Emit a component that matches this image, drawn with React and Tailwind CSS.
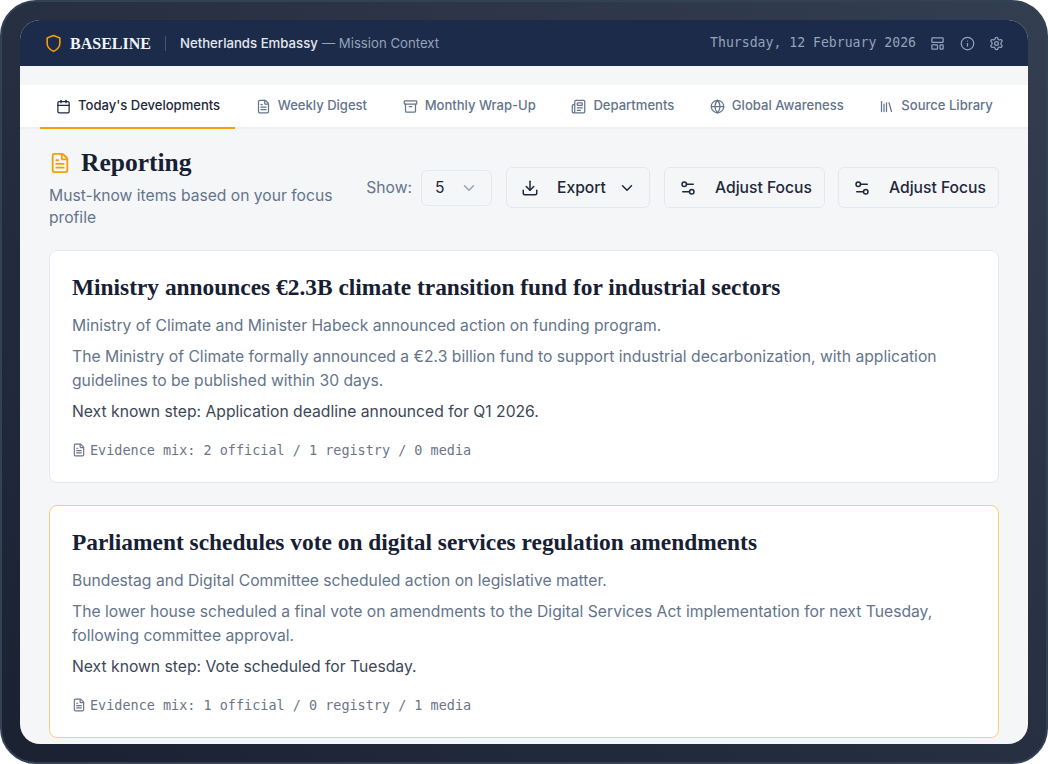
import { Archive, Calendar, ChevronDown, Download, FileText, Globe, Info, LayoutTemplate, Library, Newspaper, Settings, Settings2 } from 'lucide-react'

const serif = 'font-["Liberation_Serif",serif]'
const mono = 'font-["DejaVu_Sans_Mono",monospace]'

const tabs = [
  { label: "Today's Developments", icon: Calendar, active: true },
  { label: 'Weekly Digest', icon: FileText },
  { label: 'Monthly Wrap-Up', icon: Archive },
  { label: 'Departments', icon: Newspaper },
  { label: 'Global Awareness', icon: Globe },
  { label: 'Source Library', icon: Library },
]

const cards = [
  {
    title: 'Ministry announces €2.3B climate transition fund for industrial sectors',
    summary: 'Ministry of Climate and Minister Habeck announced action on funding program.',
    body: 'The Ministry of Climate formally announced a €2.3 billion fund to support industrial decarbonization, with application guidelines to be published within 30 days.',
    next: 'Next known step: Application deadline announced for Q1 2026.',
    evidence: 'Evidence mix: 2 official / 1 registry / 0 media',
    border: 'border-[#e2e8f0]',
  },
  {
    title: 'Parliament schedules vote on digital services regulation amendments',
    summary: 'Bundestag and Digital Committee scheduled action on legislative matter.',
    body: 'The lower house scheduled a final vote on amendments to the Digital Services Act implementation for next Tuesday, following committee approval.',
    next: 'Next known step: Vote scheduled for Tuesday.',
    evidence: 'Evidence mix: 1 official / 0 registry / 1 media',
    border: 'border-[#f6cf7f]',
  },
]

function ToolButton({ icon: Icon, label, chevron, className }) {
  return (
    <button className={`h-[41px] flex items-center border border-[#e2e8f0] rounded-md text-[15.65px] font-medium text-[#1e293b] ${className}`}>
      <Icon size={18} strokeWidth={2} />
      <span className="pt-[1px]">{label}</span>
      {chevron && <ChevronDown size={18} className="-ml-[6px]" />}
    </button>
  )
}

function Card({ card }) {
  return (
    <div className={`h-[233px] shrink-0 bg-white border rounded-lg px-[22px] pt-[20px] ${card.border}`}>
      <h2 className={`${serif} text-[23.4px] leading-[32px] font-bold text-[#172033]`}>{card.title}</h2>
      <div className="text-[15.7px] leading-[24px]">
        <p className="mt-[11px] text-[#64748b]">{card.summary}</p>
        <p className="mt-[7px] text-[#64748b]">{card.body}</p>
        <p className="mt-[7px] text-[#3b4757]">{card.next}</p>
      </div>
      <div className="mt-[16px] flex items-center gap-[4px] text-[#6b7588]">
        <FileText size={14} />
        <span className={`${mono} text-[13.47px] leading-[20px]`}>{card.evidence}</span>
      </div>
    </div>
  )
}

export default function App() {
  return (
    <div className='w-[1048px] h-[764px] overflow-hidden font-["Inter",sans-serif] bg-white'>
      <div className="w-full h-full p-[18px] rounded-[36px] border-2 border-[#334155] bg-linear-to-tr from-[#1a2232] to-[#333e50]">
        <div className="h-full rounded-[20px] overflow-hidden bg-[#f5f6f8] flex flex-col">

          <header className="h-[46px] shrink-0 bg-[#1c2b4a] flex items-center justify-between px-[24px]">
            <div className="flex items-center pt-[1px]">
              <svg width="19" height="19" viewBox="0 0 24 24" fill="none" stroke="currentColor" strokeWidth="2" strokeLinecap="round" strokeLinejoin="round" className="text-[#f59e0b]">
                <path d="M12 22s8-4 8-10V5l-8-3-8 3v7c0 6 8 10 8 10" />
              </svg>
              <span className={`${serif} ml-[7px] text-[16px] font-bold text-[#f1f5f9]`}>BASELINE</span>
              <span className="ml-[14px] w-px h-[15px] bg-[#475569]"></span>
              <span className="ml-[14px] text-[13.2px] font-medium text-[#e2e8f0]">Netherlands Embassy</span>
              <span className="ml-[4px] text-[13.2px] text-[#94a3b8]">— Mission Context</span>
            </div>
            <div className="flex items-center text-[#94a3b8]">
              <span className={`${mono} text-[13.17px]`}>Thursday, 12 February 2026</span>
              <LayoutTemplate size={15} className="ml-[14px]" />
              <Info size={15} className="ml-[15px]" />
              <Settings size={15} className="ml-[14px]" />
            </div>
          </header>

          <nav className="mt-[19px] h-[44px] shrink-0 bg-white border-b-2 border-[#eef0f3] flex items-stretch pl-[20px] gap-[4.6px]">
            {tabs.map((tab) => (
              <div
                key={tab.label}
                className={`-mb-[2px] flex items-center gap-[7px] pl-[16px] pr-[15px] border-b-2 text-[13.05px] font-medium ${tab.active ? 'border-[#f59e0b] text-[#1e293b]' : 'border-transparent text-[#64748b]'}`}
              >
                <tab.icon size={15} />
                <span>{tab.label}</span>
              </div>
            ))}
          </nav>

          <main className="flex-1 min-h-0 px-[29px] pt-[20px]">
            <div className="h-[101px] flex items-start justify-between">
              <div className="w-[300px]">
                <div className="flex items-center gap-[10px]">
                  <FileText size={22} className="text-[#f59e0b]" />
                  <h1 className={`${serif} text-[25.5px] leading-[28px] font-bold text-[#172033]`}>Reporting</h1>
                </div>
                <p className="mt-[8px] text-[15.65px] leading-[22px] text-[#64748b]">Must-know items based on your focus profile</p>
              </div>
              <div className="mt-[18px] flex items-center">
                <span className="text-[15.65px] text-[#64748b]">Show:</span>
                <div className="ml-[9px] w-[71px] h-[36px] flex items-center justify-between pl-[13px] pr-[13px] border border-[#e2e8f0] rounded-md text-[15.65px] text-[#1e293b]">
                  5
                  <ChevronDown size={18} className="text-[#94a3b8]" />
                </div>
                <ToolButton icon={Download} label="Export" chevron className="ml-[14px] w-[144px] pl-[14px] gap-[18px]" />
                <ToolButton icon={Settings2} label="Adjust Focus" className="ml-[14px] w-[161px] pl-[14px] gap-[18px]" />
                <ToolButton icon={Settings2} label="Adjust Focus" className="ml-[13px] w-[161px] pl-[14px] gap-[18px]" />
              </div>
            </div>
            <div className="flex flex-col gap-[22px]">
              {cards.map((card) => (
                <Card key={card.title} card={card} />
              ))}
            </div>
          </main>

        </div>
      </div>
    </div>
  )
}
